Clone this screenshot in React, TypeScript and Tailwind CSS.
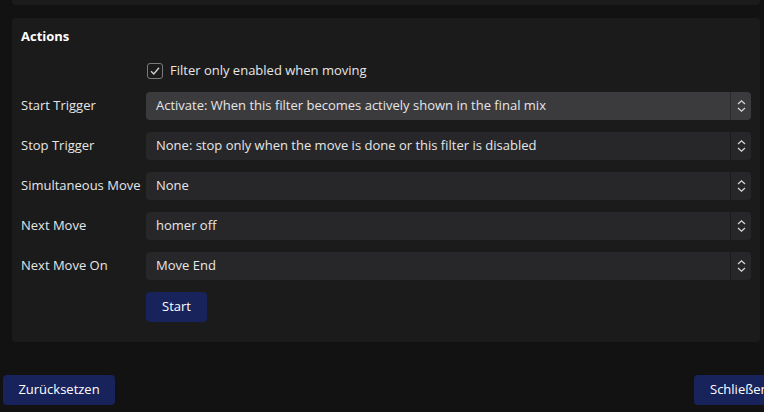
import React from "react";

const Chevrons = () => (
  <svg width="9" height="14" viewBox="0 0 9 14" fill="none" stroke="#d8d8d8" strokeWidth="1.2">
    <path d="M1 5 L4.5 1.8 L8 5" />
    <path d="M1 9 L4.5 12.2 L8 9" />
  </svg>
);

const Combo = ({ value, active }: { value: string; active?: boolean }) => (
  <div
    className={`flex-1 h-[28px] rounded-[4px] flex items-stretch ${active ? "bg-[#3b3b3e]" : "bg-[#27272a]"}`}
  >
    <div className="flex-1 flex items-center pl-[10px] text-[13px] text-[#e6e6e6]">{value}</div>
    <div className={`w-[21px] flex items-center justify-center border-l ${active ? "border-[#2a2a2d]" : "border-[#1c1c1f]"}`}>
      <Chevrons />
    </div>
  </div>
);

const Row = ({ label, value, active }: { label: string; value: string; active?: boolean }) => (
  <div className="flex items-center h-[28px]">
    <div className="w-[125px] text-[13px] text-[#e6e6e6]">{label}</div>
    <Combo value={value} active={active} />
  </div>
);

export default function App() {
  return (
    <div
      className="w-[764px] h-[412px] bg-[#121212] overflow-hidden flex flex-col"
      style={{ fontFamily: '"Open Sans", "Noto Sans", sans-serif' }}
    >
      <div className="ml-[12px] w-[748px] h-[5px] bg-[#1b1b1b] rounded-b-[4px]" />
      <div className="ml-[12px] mt-[13px] w-[748px] h-[324px] bg-[#1b1b1b] rounded-[4px] pl-[9px] pr-[9px] pt-[9px] flex flex-col">
        <div className="text-[13px] font-bold text-white leading-[18px]">Actions</div>
        <div className="mt-[17px] ml-[126px] flex items-center h-[18px]">
          <div className="w-[16px] h-[16px] rounded-[3px] border border-[#7a7a7a] flex items-center justify-center">
            <svg width="12" height="12" viewBox="0 0 12 12" fill="none" stroke="#cfcfcf" strokeWidth="1.4">
              <path d="M2 6.3 L4.8 9 L10 2.8" />
            </svg>
          </div>
          <span className="ml-[7px] text-[13px] text-[#e6e6e6]">Filter only enabled when moving</span>
        </div>
        <div className="mt-[12px] flex flex-col gap-[12px]">
          <Row label="Start Trigger" value="Activate: When this filter becomes actively shown in the final mix" active />
          <Row label="Stop Trigger" value="None: stop only when the move is done or this filter is disabled" />
          <Row label="Simultaneous Move" value="None" />
          <Row label="Next Move" value="homer off" />
          <Row label="Next Move On" value="Move End" />
        </div>
        <div className="mt-[12px] ml-[125px]">
          <button className="w-[61px] h-[30px] rounded-[4px] bg-[#18235b] text-[13px] text-white">Start</button>
        </div>
      </div>
      <div className="mt-[33px] flex justify-between pl-[3px] mr-[-20px]">
        <button className="w-[112px] h-[30px] rounded-[4px] bg-[#18235b] text-[13px] text-white">Zurücksetzen</button>
        <button className="w-[90px] h-[30px] rounded-[4px] bg-[#18235b] text-[13px] text-white text-left pl-[16px]">Schließen</button>
      </div>
    </div>
  );
}
